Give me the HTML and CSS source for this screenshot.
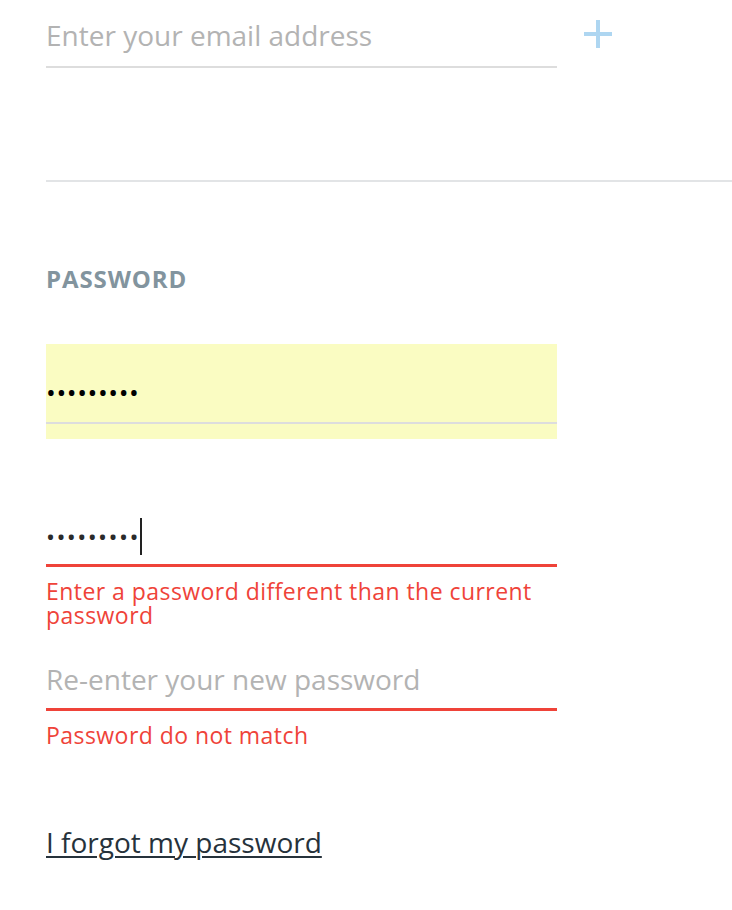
FILE: index.html
```html
<!DOCTYPE html>
<html>
<head>
<meta charset="utf-8">
<link rel="stylesheet" href="styles.css">
</head>
<body>
<div class="page">
  <div class="email-row">
    <div class="field email-field">
      <span class="placeholder">Enter your email address</span>
    </div>
    <svg class="plus" width="28" height="28" viewBox="0 0 28 28"><rect x="12" y="0" width="4" height="28" fill="#aed6f1"/><rect x="0" y="12" width="28" height="4" fill="#aed6f1"/></svg>
  </div>
  <div class="divider"></div>
  <h2 class="label">PASSWORD</h2>
  <div class="autofill">
    <div class="field current-field"><span class="dots">•••••••••</span></div>
  </div>
  <div class="field new-field error"><span class="dots dark">•••••••••</span><span class="caret"></span></div>
  <div class="msg msg-1">Enter a password different than the current password</div>
  <div class="field repeat-field error"><span class="placeholder">Re-enter your new password</span></div>
  <div class="msg msg-2">Password do not match</div>
  <a class="forgot" href="#">I forgot my password</a>
</div>
</body>
</html>
```
FILE: styles.css
```css
html, body { margin: 0; padding: 0; background: #fff; }
body { font-family: "Open Sans", "Liberation Sans", sans-serif; }
.page { padding-left: 46px; }
.email-row { display: flex; align-items: flex-start; }
.field { width: 511px; box-sizing: border-box; border-bottom: 2px solid #dddddd; }
.email-field { height: 68px; padding-top: 15px; }
.placeholder { color: #b3b3b3; font-size: 28px; line-height: 40px; display: block; }
.plus { margin-left: 27px; margin-top: 20px; }
.divider { height: 2px; background: #e2e4e6; margin-top: 112px; }
.label { margin: 82px 0 0; font-size: 24px; font-weight: 700; color: #82949e; line-height: 30px; letter-spacing: 0.9px; }
.autofill { width: 511px; height: 95px; background: #fafcc2; margin-top: 50px; }
.current-field { height: 80px; padding-top: 33px; }
.dots { font-size: 26px; line-height: 30px; color: #000; letter-spacing: 0.6px; display: block; }
.new-field { margin-top: 75px; height: 53px; padding-top: 8px; display: flex; align-items: flex-start; }
.new-field .dots { font-size: 24px; letter-spacing: 1.4px; color: #2a2a2a; }
.caret { width: 2px; height: 37px; background: #222; margin-left: 0; margin-top: -4px; }
.field.error { border-bottom: 3px solid #ef4339; }
.msg { color: #ef4339; font-size: 23px; line-height: 24px; width: 511px; letter-spacing: 0.45px; }
.msg-1 { margin-top: 12px; }
.repeat-field { margin-top: 32px; height: 52px; padding-top: 0; }
.msg-2 { margin-top: 12px; }
.forgot { display: block; width: max-content; margin-top: 77px; color: #26323b; font-size: 28px; line-height: 36px; text-decoration: underline; text-underline-offset: 3px; text-decoration-thickness: 2px; }
```
